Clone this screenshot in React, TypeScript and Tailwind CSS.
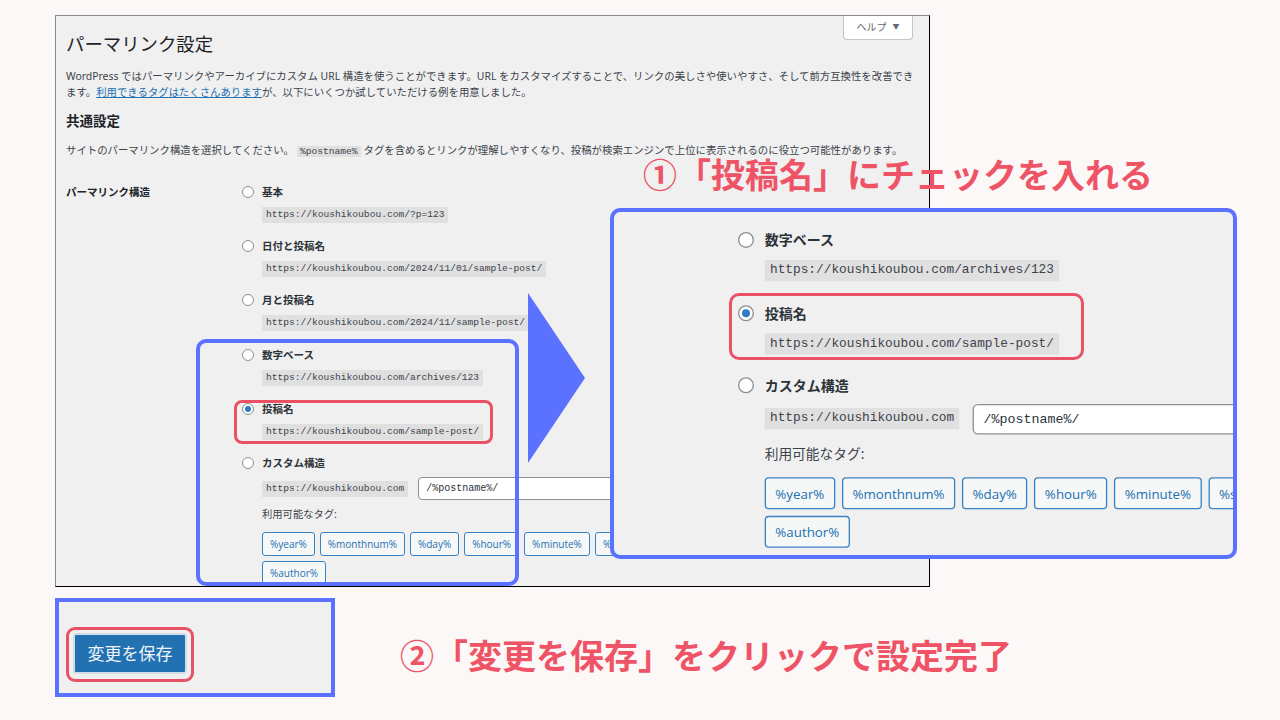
import React from "react";

// permalink options shown in the WP settings screenshot
const options = [
  { label: "基本", url: "https://koushikoubou.com/?p=123" },
  { label: "日付と投稿名", url: "https://koushikoubou.com/2024/11/01/sample-post/" },
  { label: "月と投稿名", url: "https://koushikoubou.com/2024/11/sample-post/" },
  { label: "数字ベース", url: "https://koushikoubou.com/archives/123" },
  { label: "投稿名", url: "https://koushikoubou.com/sample-post/", checked: true },
];

const tags = [
  "%year%",
  "%monthnum%",
  "%day%",
  "%hour%",
  "%minute%",
  "%second%",
  "%post_id%",
  "%postname%",
  "%category%",
  "%author%",
];

function Radio({ checked }: { checked?: boolean }) {
  return (
    <span className="flex h-[12px] w-[12px] shrink-0 items-center justify-center rounded-full border border-[#8c8f94] bg-white">
      {checked && <span className="h-[6px] w-[6px] rounded-full bg-[#2f7cc4]" />}
    </span>
  );
}

function Code({ children }: { children: React.ReactNode }) {
  return (
    <code className="inline-block h-[16px] whitespace-nowrap bg-[#e0e0e1] px-[4px] font-['Liberation_Mono',monospace] text-[9.6px] leading-[16px] text-[#3c434a]">
      {children}
    </code>
  );
}

function OptionList() {
  return (
    <div className="flex w-[677px] flex-col gap-[15.4px] font-['Noto_Sans','Noto_Sans_CJK_JP',sans-serif]">
      {options.map((o) => (
        <div key={o.label} className="flex flex-col">
          <div className="flex h-[16px] items-center gap-[8px]">
            <Radio checked={o.checked} />
            <span className="text-[10.5px] font-bold leading-[16px] text-[#2c3338]">{o.label}</span>
          </div>
          <div className="mt-[7px] flex pl-[20px]">
            <Code>{o.url}</Code>
          </div>
        </div>
      ))}
      {/* custom structure */}
      <div className="flex flex-col">
        <div className="flex h-[16px] items-center gap-[8px]">
          <Radio />
          <span className="text-[10.5px] font-bold leading-[16px] text-[#2c3338]">カスタム構造</span>
        </div>
        <div className="mt-[6px] flex items-center gap-[10px] pl-[20px]">
          <Code>https://koushikoubou.com</Code>
          <div className="h-[23px] w-[440px] rounded-[4px] border border-[#8c8f94] bg-white px-[7px] font-['Liberation_Mono',monospace] text-[10px] leading-[21px] text-[#2c3338]">
            /%postname%/
          </div>
        </div>
        <p className="mt-[6px] pl-[20px] text-[10.3px] leading-[16px] text-[#3c434a]">利用可能なタグ:</p>
        <div className="mt-[10px] flex flex-wrap gap-[5px] pl-[20px]">
          {tags.map((t) => (
            <span
              key={t}
              className="h-[24px] rounded-[3px] border border-[#3a83c5] bg-[#f6f7f7] px-[7px] font-['Open_Sans',sans-serif] text-[10px] leading-[22px] text-[#2271b1]"
            >
              {t}
            </span>
          ))}
        </div>
      </div>
    </div>
  );
}

export default function App() {
  return (
    <div className="relative h-[720px] w-[1280px] overflow-hidden bg-[#fcf8f8] font-['Noto_Sans','Noto_Sans_CJK_JP',sans-serif]">
      {/* WordPress screenshot */}
      <div className="relative ml-[55px] mt-[15px] h-[572px] w-[875px] border border-t-[#8c8c8c] border-l-[#8c8c8c] border-r-black border-b-black bg-[#f0f0f1] pl-[10px] pt-[16px]">
        <div className="absolute right-[16px] top-0 flex h-[24px] w-[70px] items-center justify-center gap-[6px] rounded-b-[4px] border border-t-0 border-[#c3c4c7] bg-white text-[10px] text-[#646970]">
          <span>ヘルプ</span>
          <span className="text-[7px]">▼</span>
        </div>
        <h1 className="text-[18.4px] font-normal leading-[24px] text-[#1d2327]">パーマリンク設定</h1>
        <p className="mt-[12px] whitespace-nowrap text-[10.4px] leading-[16px] text-[#3c434a]">
          WordPress ではパーマリンクやアーカイブにカスタム URL 構造を使うことができます。URL をカスタマイズすることで、リンクの美しさや使いやすさ、そして前方互換性を改善でき
          <br />
          ます。
          <span className="text-[#2271b1] underline">利用できるタグはたくさんあります</span>
          が、以下にいくつか試していただける例を用意しました。
        </p>
        <h2 className="mt-[12px] text-[13.5px] font-bold leading-[18px] text-[#1d2327]">共通設定</h2>
        <p className="mt-[12px] whitespace-nowrap text-[10.4px] leading-[16px] text-[#3c434a]">
          サイトのパーマリンク構造を選択してください。
          <code className="mx-[3px] bg-[#e0e0e1] px-[3px] font-['Liberation_Mono',monospace] text-[9.6px] leading-[16px]">%postname%</code>
          タグを含めるとリンクが理解しやすくなり、投稿が検索エンジンで上位に表示されるのに役立つ可能性があります。
        </p>
        <div className="mt-[23.5px] flex">
          <div className="w-[176px] text-[10.5px] font-bold leading-[16px] text-[#1d2327]">パーマリンク構造</div>
          <OptionList />
        </div>
      </div>

      {/* save button area */}
      <div className="ml-[55px] mt-[11px] flex items-start gap-[65px]">
        <div className="h-[99px] w-[280px] border-[4px] border-[#5a72ff] bg-[#f0f0f1] pl-[14px] pt-[31px]">
          <div className="flex h-[41px] w-[114px] items-center justify-center rounded-[3px] border-2 border-[#d3dce6] bg-[#2271b1] text-[17px] text-[#eef4fa]">
            変更を保存
          </div>
        </div>
        <p className="mt-[37px] whitespace-nowrap font-['Noto_Sans_CJK_JP',sans-serif] text-[34px] font-bold leading-[40px] text-[#ef5466]">
          ②「変更を保存」をクリックで設定完了
        </p>
      </div>

      {/* annotations */}
      <p className="absolute left-[643px] top-[154px] whitespace-nowrap font-['Noto_Sans_CJK_JP',sans-serif] text-[34px] font-bold leading-[40px] text-[#ef5466]">
        ①「投稿名」にチェックを入れる
      </p>
      <div className="absolute left-[196px] top-[339px] h-[247px] w-[323px] rounded-[10px] border-[4px] border-[#5a72ff]" />
      <div className="absolute left-[234px] top-[400px] h-[44px] w-[259px] rounded-[8px] border-[3px] border-[#eb5164]" />
      <svg className="absolute left-[528px] top-[293px]" width="57" height="170" viewBox="0 0 57 170">
        <polygon points="0,0 57,85 0,170" fill="#5a72ff" />
      </svg>

      {/* zoomed view */}
      <div className="absolute left-[610px] top-[208px] h-[351px] w-[627px] overflow-hidden rounded-[10px] border-[4px] border-[#5a72ff] bg-[#f0f0f1]">
        <div className="absolute left-[124.3px] top-[-199.8px] origin-top-left scale-[1.333]">
          <OptionList />
        </div>
      </div>
      <div className="absolute left-[729px] top-[293px] h-[67px] w-[355px] rounded-[10px] border-[3px] border-[#eb5164]" />
      <div className="absolute left-[66px] top-[627px] h-[55px] w-[128px] rounded-[9px] border-[3px] border-[#eb5164]" />
    </div>
  );
}
